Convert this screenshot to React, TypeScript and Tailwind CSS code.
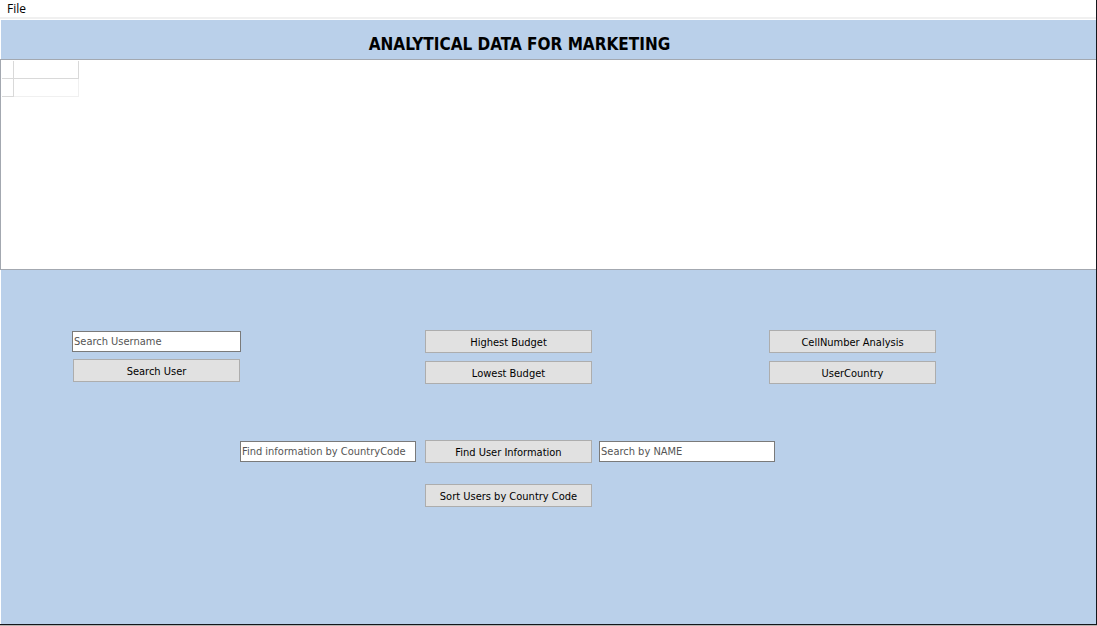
import type { ReactNode } from "react";

function ActionButton({ children }: { children: ReactNode }) {
  return (
    <button
      type="button"
      className="block h-[23px] w-[167px] border border-[#adadad] bg-[#e1e1e1] pt-px text-center text-[11px] leading-[21px] whitespace-nowrap text-black hover:border-[#0078d7] hover:bg-[#e5f1fb]"
    >
      {children}
    </button>
  );
}

function SearchBox({ label, wide = false }: { label: string; wide?: boolean }) {
  return (
    <input
      type="text"
      aria-label={label}
      defaultValue={label}
      className={`${wide ? "w-[176px]" : "w-[169px]"} block h-[21px] rounded-none border border-[#7a7a7a] bg-white px-px pb-px text-[11px] leading-[18px] text-[#555555] outline-none focus:border-[#0078d7]`}
    />
  );
}

export default function App() {
  return (
    <div className="flex min-h-screen flex-col border-b border-[#b9b3b0] font-['DejaVu_Sans_Condensed','DejaVu_Sans',sans-serif]">
      <div className="flex grow flex-col border-r border-b border-[#14161b] bg-white">
        <nav className="flex h-[19px] border-b-2 border-[#f0f0f0] pl-[7px] font-['Open_Sans','Noto_Sans',sans-serif]">
          <button type="button" className="text-xs leading-[17px] text-black">
            File
          </button>
        </nav>

        <header className="mt-px ml-px flex h-[39px] justify-center bg-[#bad0ea] pt-3 pr-[58px]">
          <h1 className="text-[17px] leading-6 font-bold whitespace-nowrap text-black">
            ANALYTICAL DATA FOR MARKETING
          </h1>
        </header>

        <section className="h-[211px] border-y border-l border-[#a3a8b0] bg-white pt-px pl-px">
          <table aria-label="Marketing data" className="border-separate border-spacing-0">
            <thead>
              <tr className="h-[18px]">
                <th className="w-3 border-r border-b border-[#d9d9d9] p-0" />
                <th className="w-[65px] border-r border-b border-[#d9d9d9] p-0" />
              </tr>
            </thead>
            <tbody>
              <tr className="h-[18px]">
                <th className="border-r border-b border-[#d9d9d9] p-0" />
                <td className="border-r border-b border-[#f0f0f0] p-0" />
              </tr>
            </tbody>
          </table>
        </section>

        <main className="ml-px grow bg-[#bad0ea] pt-[60px]">
          <div className="grid grid-cols-[353fr_344fr_327fr] pl-[71px]">
            <div className="flex flex-col gap-[7px] pt-px">
              <SearchBox label="Search Username" />
              <div className="pl-px">
                <ActionButton>Search User</ActionButton>
              </div>
            </div>
            <div className="flex flex-col gap-2">
              <ActionButton>Highest Budget</ActionButton>
              <ActionButton>Lowest Budget</ActionButton>
            </div>
            <div className="flex flex-col gap-2">
              <ActionButton>CellNumber Analysis</ActionButton>
              <ActionButton>UserCountry</ActionButton>
            </div>
          </div>

          <div className="mt-14 flex justify-center pr-[82px]">
            <div className="grid grid-cols-[185px_174px_176px] gap-y-[21px]">
              <div className="pt-px">
                <SearchBox label="Find information by CountryCode" wide />
              </div>
              <ActionButton>Find User Information</ActionButton>
              <div className="pt-px">
                <SearchBox label="Search by NAME" wide />
              </div>
              <div className="col-start-2">
                <ActionButton>Sort Users by Country Code</ActionButton>
              </div>
            </div>
          </div>
        </main>
      </div>
    </div>
  );
}
